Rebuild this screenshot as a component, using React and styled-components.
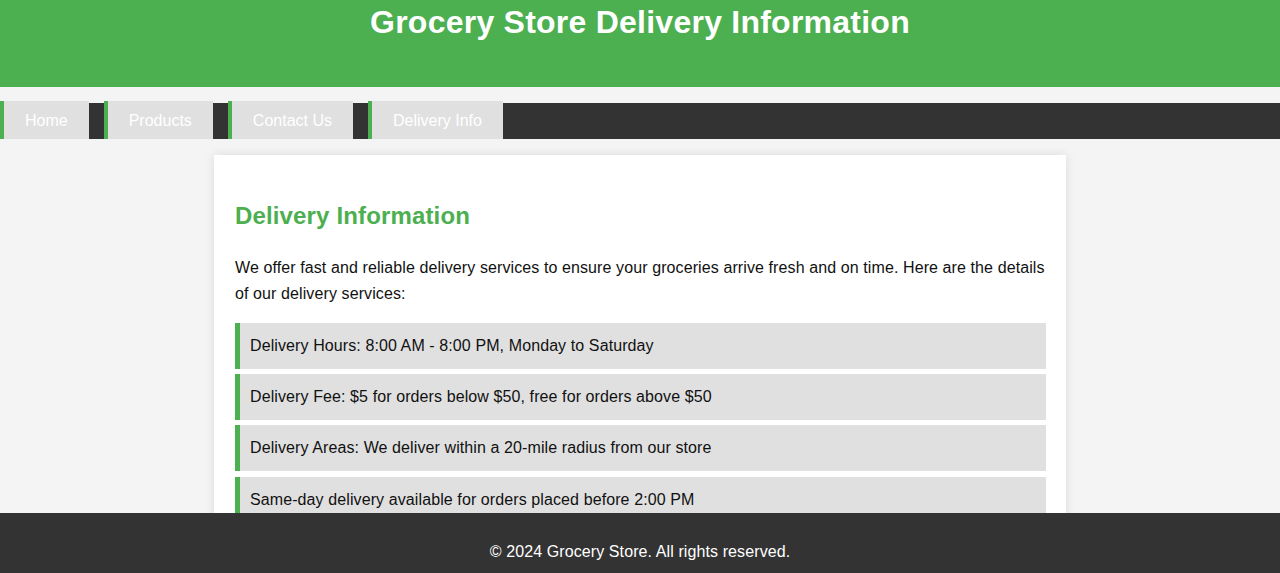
import React from "react";
import styled, { createGlobalStyle } from "styled-components";

const GlobalStyle = createGlobalStyle`
  html, body {
    margin: 0;
    padding: 0;
  }
  body {
    font-family: "Liberation Sans", Arial, sans-serif;
    line-height: 1.6;
    background: #f4f4f4;
    color: #111;
    letter-spacing: 0.1px;
  }
`;

const links = ["Home", "Products", "Contact Us", "Delivery Info"];

const details = [
  "Delivery Hours: 8:00 AM - 8:00 PM, Monday to Saturday",
  "Delivery Fee: $5 for orders below $50, free for orders above $50",
  "Delivery Areas: We deliver within a 20-mile radius from our store",
  "Same-day delivery available for orders placed before 2:00 PM",
];

function App() {
  return (
    <Page>
      <GlobalStyle />
      {/* header */}
      <Header>
        <h1>Grocery Store Delivery Information</h1>
      </Header>

      {/* nav */}
      <Nav>
        {links.map((l) => (
          <NavLink key={l} href="#">
            {l}
          </NavLink>
        ))}
      </Nav>

      {/* content */}
      <Main>
        <Card>
          <h2>Delivery Information</h2>
          <p>
            We offer fast and reliable delivery services to ensure your
            groceries arrive fresh and on time. Here are the details of our
            delivery services:
          </p>
          <List>
            {details.map((d) => (
              <li key={d}>{d}</li>
            ))}
          </List>
        </Card>
      </Main>

      {/* footer */}
      <Footer>
        <p>&copy; 2024 Grocery Store. All rights reserved.</p>
      </Footer>
    </Page>
  );
}

export default App;

const Page = styled.div`
  height: 100vh;
  display: flex;
  flex-direction: column;
  overflow: hidden;
`;

const Header = styled.header`
  flex-shrink: 0;
  height: 87px;
  background: #4caf50;
  color: #fff;
  text-align: center;
  h1 {
    margin: 0;
    font-size: 32px;
    line-height: 44px;
    font-weight: bold;
    letter-spacing: 0.24px;
  }
`;

const Nav = styled.nav`
  flex-shrink: 0;
  margin-top: 16px;
  height: 36px;
  background: #333;
  display: flex;
  align-items: flex-end;
  gap: 15px;
`;

const NavLink = styled.a`
  box-sizing: border-box;
  height: 38px;
  line-height: 36px;
  padding: 2px 21px 0;
  border-left: 4px solid #4caf50;
  background: #e0e0e0;
  color: #fff;
  font-size: 16px;
  letter-spacing: 0;
  text-decoration: none;
`;

const Main = styled.main`
  flex: 1;
  min-height: 0;
  overflow: hidden;
  padding-top: 16px;
`;

const Card = styled.section`
  box-sizing: border-box;
  max-width: 852px;
  margin: 0 auto;
  padding: 20px 20px 20px 21px;
  background: #fff;
  box-shadow: 0 0 10px rgba(0, 0, 0, 0.1);
  h2 {
    margin: 22px 0 20px;
    font-size: 24px;
    line-height: 38.4px;
    letter-spacing: 0.15px;
    color: #4caf50;
  }
  p {
    margin: 0;
    font-size: 16px;
  }
`;

const List = styled.ul`
  list-style: none;
  margin: 16.5px 0 0;
  padding: 0;
  li {
    margin-bottom: 5.6px;
    padding: 10px;
    border-left: 5px solid #4caf50;
    background: #e0e0e0;
    font-size: 16px;
  }
`;

const Footer = styled.footer`
  flex-shrink: 0;
  box-sizing: border-box;
  height: 60.5px;
  padding-top: 26px;
  background: #333;
  color: #fff;
  text-align: center;
  p {
    margin: 0;
    font-size: 16px;
  }
`;
